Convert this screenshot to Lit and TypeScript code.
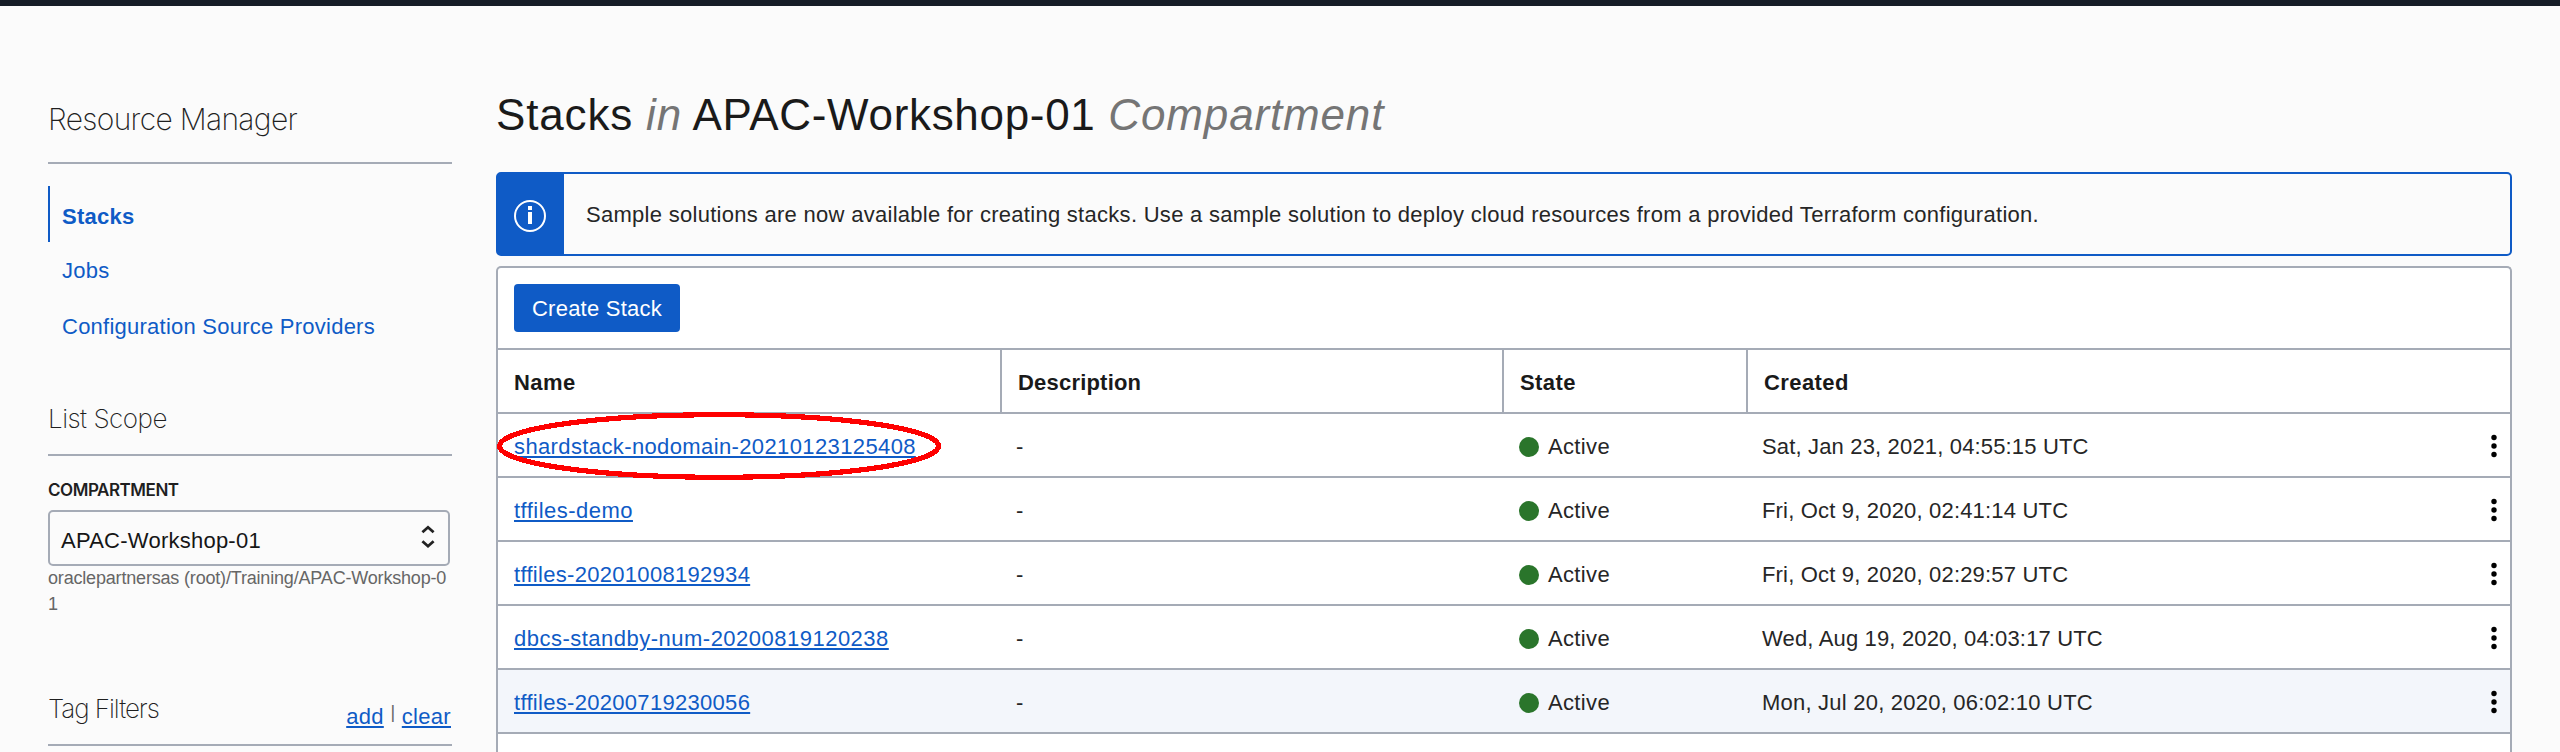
import { LitElement, html, css } from "lit";
import { customElement } from "lit/decorators.js";
import { styleMap } from "lit/directives/style-map.js";

interface Stack {
  name: string;
  nameTracking: number;
  created: string;
  createdTracking: number;
  marked?: boolean;
  hovered?: boolean;
}

const STACKS: Stack[] = [
  { name: "shardstack-nodomain-20210123125408", nameTracking: 0.38, created: "Sat, Jan 23, 2021, 04:55:15 UTC", createdTracking: 0.16, marked: true },
  { name: "tffiles-demo", nameTracking: 0.47, created: "Fri, Oct 9, 2020, 02:41:14 UTC", createdTracking: 0.18 },
  { name: "tffiles-20201008192934", nameTracking: 0.3, created: "Fri, Oct 9, 2020, 02:29:57 UTC", createdTracking: 0.18 },
  { name: "dbcs-standby-num-20200819120238", nameTracking: 0.49, created: "Wed, Aug 19, 2020, 04:03:17 UTC", createdTracking: 0.16 },
  { name: "tffiles-20200719230056", nameTracking: 0.3, created: "Mon, Jul 20, 2020, 06:02:10 UTC", createdTracking: 0.22, hovered: true },
];

const tracking = (px: number) => styleMap({ letterSpacing: `${px}px` });

@customElement("side-bar")
export class SideBar extends LitElement {
  static styles = css`
    :host { display: block; width: 404px; padding-top: 95px; color: #1f1f1f; }
    .title {
      font: 200 30px/36px Inter, sans-serif;
      letter-spacing: -0.68px;
      padding-bottom: 25px;
      border-bottom: 2px solid #a5abb6;
    }
    .nav { margin-top: 22px; }
    .item {
      box-sizing: border-box;
      display: block;
      height: 56px;
      padding: 16px 0 0 14px;
      color: #0f5bc6;
      text-decoration: none;
      letter-spacing: 0.24px;
    }
    .item.active {
      padding: 18px 0 0 12px;
      border-left: 2px solid #0f5bc6;
      font-weight: bold;
    }
    .section {
      display: flex;
      justify-content: space-between;
      padding-bottom: 20px;
      border-bottom: 2px solid #a5abb6;
      font: 200 26px/31px Inter, sans-serif;
    }
    .scope { margin-top: 49px; letter-spacing: -0.5px; }
    .tags { margin-top: 76px; letter-spacing: -1.05px; }
    .label {
      margin-top: 24px;
      font: 600 17px/20px Inter, sans-serif;
      letter-spacing: -0.46px;
    }
    .select {
      box-sizing: border-box;
      display: flex;
      justify-content: space-between;
      width: 402px;
      height: 56px;
      margin-top: 10px;
      padding: 16px 13px 0 11px;
      border: 2px solid #a5abb6;
      border-radius: 5px;
      color: #161616;
      letter-spacing: 0.24px;
    }
    .caret { width: 16px; height: 25px; overflow: visible; }
    .path {
      margin-top: -1px;
      font-size: 18px;
      line-height: 26px;
      letter-spacing: -0.18px;
      color: #666;
      word-break: break-all;
    }
    .actions {
      display: flex;
      height: 31px;
      font: 22px/25px "Liberation Sans", Arial, sans-serif;
      letter-spacing: 0.3px;
      padding: 11px 1px 0 0;
      box-sizing: border-box;
    }
    .actions a { color: #0f5bc6; text-decoration: underline 2px; text-underline-offset: 2px; }
    .bar { width: 18px; text-align: center; font-size: 18px; line-height: 20px; color: #666; margin-top: -2px; letter-spacing: 0; }
  `;

  render() {
    return html`
      <div class="title">Resource Manager</div>
      <nav class="nav">
        <a class="item active">Stacks</a>
        <a class="item">Jobs</a>
        <a class="item">Configuration Source Providers</a>
      </nav>
      <div class="section scope">List Scope</div>
      <div class="label">COMPARTMENT</div>
      <div class="select">
        <span>APAC-Workshop-01</span>
        <svg class="caret" viewBox="0 0 16 25" fill="none" stroke="#222" stroke-width="2.8">
          <path d="M3.4 4.3 9 -.7l5.6 5M3.4 13.2l5.6 5 5.6-5" />
        </svg>
      </div>
      <div class="path">oraclepartnersas (root)/Training/APAC-Workshop-01</div>
      <div class="section tags">
        <span>Tag Filters</span>
        <span class="actions"><a>add</a><span class="bar">|</span><a>clear</a></span>
      </div>
    `;
  }
}

@customElement("info-banner")
export class InfoBanner extends LitElement {
  static styles = css`
    :host {
      box-sizing: border-box;
      display: flex;
      height: 84px;
      border: 2px solid #0f5bc6;
      border-radius: 5px;
    }
    .badge {
      display: flex;
      align-items: center;
      justify-content: center;
      width: 66px;
      background: #0f5bc6;
    }
    .text { padding: 28px 0 0 22px; letter-spacing: 0.285px; color: #262626; white-space: nowrap; }
  `;

  render() {
    return html`
      <div class="badge">
        <svg width="34" height="38" viewBox="0 0 34 38">
          <circle cx="16" cy="21" r="15" fill="none" stroke="#fff" stroke-width="2" />
          <path d="M14 11h4v4h-4zM14 17h4v12h-4z" fill="#fff" />
        </svg>
      </div>
      <div class="text"><slot></slot></div>
    `;
  }
}

@customElement("stack-table")
export class StackTable extends LitElement {
  static styles = css`
    :host {
      box-sizing: border-box;
      display: block;
      flex: 1;
      margin-top: 10px;
      border: 2px solid #a5abb6;
      border-bottom: 0;
      border-radius: 5px 5px 0 0;
      background: #fff;
      color: #262626;
    }
    .toolbar { height: 64px; padding: 16px 0 0 16px; border-bottom: 2px solid #a5abb6; }
    .create {
      box-sizing: border-box;
      display: block;
      width: 166px;
      height: 48px;
      padding: 1px 0 0 0;
      border: 0;
      border-radius: 4px;
      background: #0f5bc6;
      color: #fff;
      font: inherit;
      letter-spacing: 0.24px;
      text-align: center;
    }
    .row {
      position: relative;
      display: grid;
      grid-template-columns: 504px 502px 244px 1fr 36px;
      height: 62px;
      border-bottom: 2px solid #a5abb6;
    }
    .row > .cell { padding: 20px 0 0 14px; }
    .row > .cell.name { padding-left: 16px; }
    .head { color: #1a1a1a; font-weight: bold; }
    .head > .cell { padding-left: 16px; letter-spacing: 0.4px; }
    .head > .cell.desc { letter-spacing: 0.2px; }
    .head > .split { border-right: 2px solid #a5abb6; }
    .row.hovered { background: #f3f6fb; }
    .link { color: #0f5bc6; text-decoration: underline 2px; text-underline-offset: 2px; }
    .state { display: flex; letter-spacing: 0.35px; }
    .dot { width: 20px; height: 20px; margin: 3px 9px 0 1px; border-radius: 50%; background: #2a752b; }
    .menu { width: 36px; height: 62px; }
    .mark { position: absolute; left: -2px; top: -3px; width: 448px; height: 70px; }
  `;

  private row(s: Stack) {
    return html`
      <div class="row ${s.hovered ? "hovered" : ""}">
        <div class="cell name"><a class="link" style=${tracking(s.nameTracking)}>${s.name}</a></div>
        <div class="cell">-</div>
        <div class="cell state"><span class="dot"></span>Active</div>
        <div class="cell" style=${tracking(s.createdTracking)}>${s.created}</div>
        <svg class="menu" viewBox="0 0 36 62">
          <circle cx="20" cy="23.5" r="2.7" />
          <circle cx="20" cy="32" r="2.7" />
          <circle cx="20" cy="40.5" r="2.7" />
        </svg>
        ${s.marked
          ? html`<svg class="mark" viewBox="0 0 448 70" shape-rendering="crispEdges">
              <ellipse cx="223" cy="35" rx="219.5" ry="31.3" fill="none" stroke="#fe0000" stroke-width="5.2" />
            </svg>`
          : null}
      </div>
    `;
  }

  render() {
    return html`
      <div class="toolbar"><button class="create">Create Stack</button></div>
      <div class="row head">
        <div class="cell split">Name</div>
        <div class="cell split desc">Description</div>
        <div class="cell split">State</div>
        <div class="cell">Created</div>
      </div>
      ${STACKS.map((s) => this.row(s))}
    `;
  }
}

@customElement("app-root")
export class AppRoot extends LitElement {
  static styles = css`
    :host {
      display: flex;
      flex-direction: column;
      height: 752px;
      overflow: hidden;
      background: #fbfbfb;
      font: 22px/25px "Liberation Sans", Arial, sans-serif;
    }
    .topbar { flex: none; height: 6px; background: #161d27; }
    .page { display: flex; flex: 1; min-height: 0; gap: 44px; padding: 0 48px; }
    .main { display: flex; flex: 1; flex-direction: column; padding-top: 84px; }
    .heading { margin: 0 0 33px; font-size: 44px; font-weight: 400; line-height: 49px; color: #1a1a1a; letter-spacing: 0.68px; }
    .heading em { color: #757575; letter-spacing: 0.85px; }
    .what { letter-spacing: 0.85px; }
  `;

  render() {
    return html`
      <div class="topbar"></div>
      <div class="page">
        <side-bar></side-bar>
        <div class="main">
          <h1 class="heading"><span class="what">Stacks</span> <em>in</em> APAC-Workshop-01 <em>Compartment</em></h1>
          <info-banner>Sample solutions are now available for creating stacks. Use a sample solution to deploy cloud resources from a provided Terraform configuration.</info-banner>
          <stack-table></stack-table>
        </div>
      </div>
    `;
  }
}
